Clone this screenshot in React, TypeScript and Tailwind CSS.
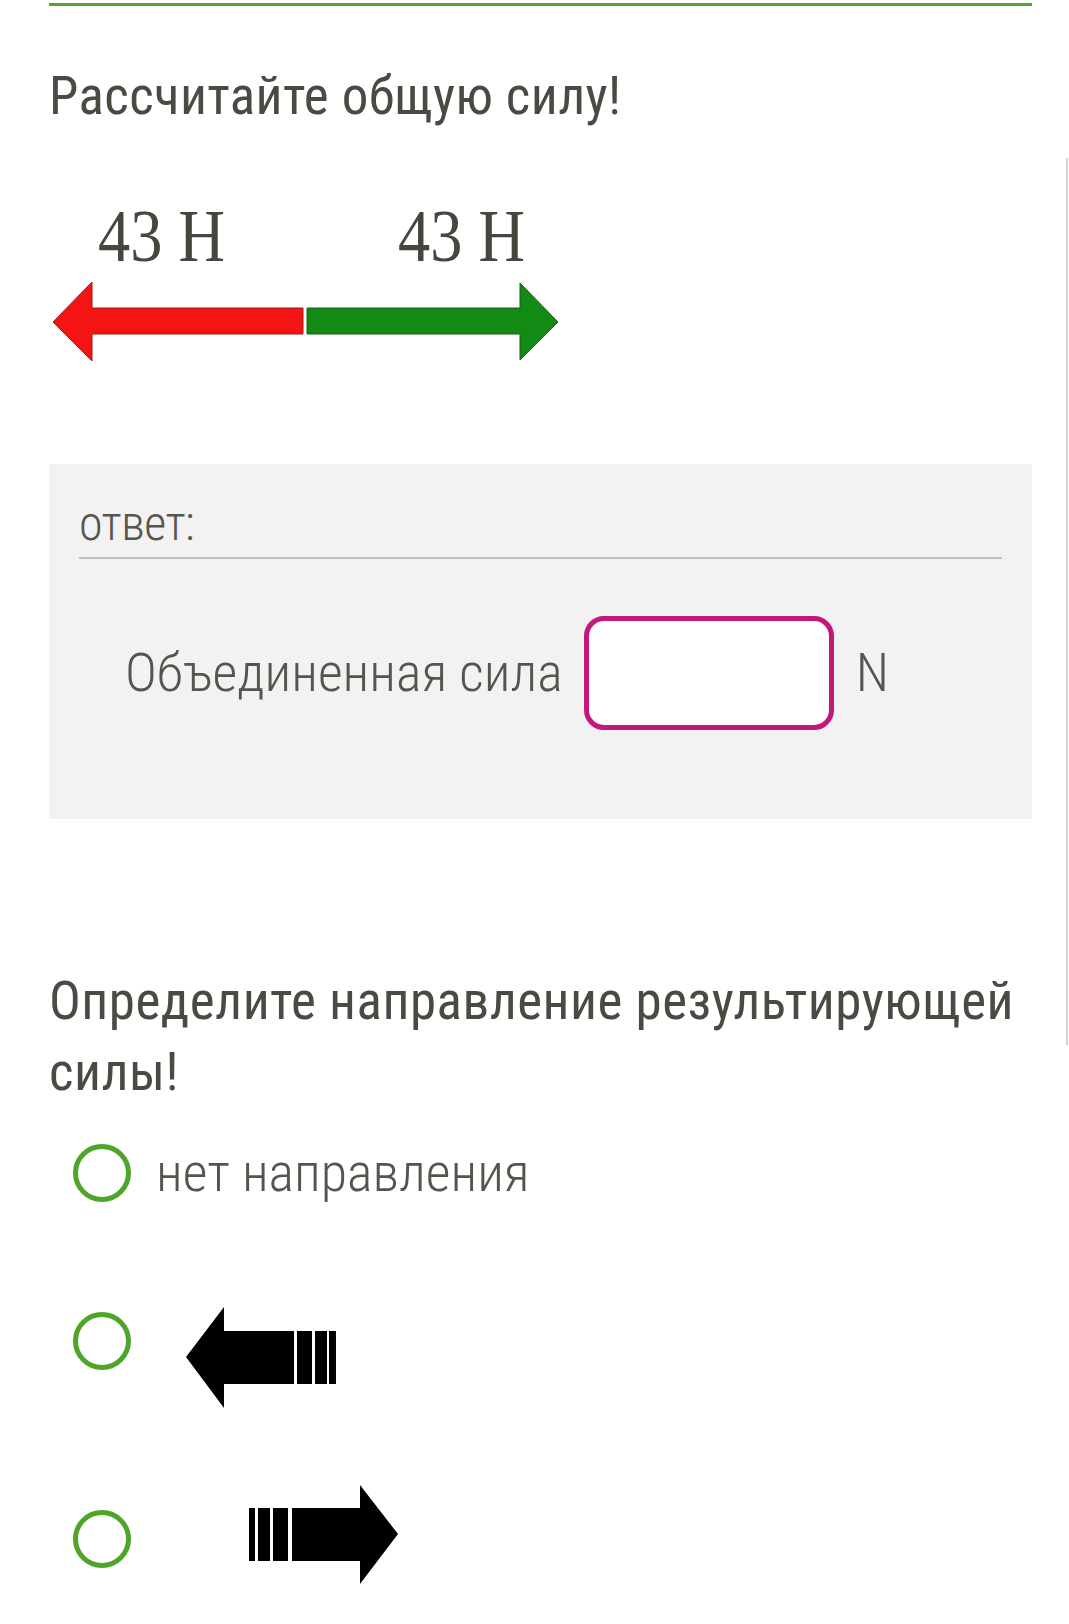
import React from 'react'

const cond = "font-['Roboto_Condensed','Roboto',sans-serif]"

function ForceArrows() {
  return (
    <svg width="520" height="85" viewBox="0 0 520 85" className="block">
      {/* red arrow pointing left */}
      <polygon
        points="4,43 43,3 43,29 254,29 254,55 43,55 43,82"
        fill="#f41414"
        stroke="#9a1b1b"
        strokeWidth="1"
        strokeLinejoin="miter"
      />
      {/* green arrow pointing right */}
      <polygon
        points="258,29 471,29 471,4 509,43 471,81 471,55 258,55"
        fill="#138a13"
        stroke="#1d5a1d"
        strokeWidth="1"
      />
    </svg>
  )
}

function LeftArrow() {
  return (
    <svg width="154" height="104" viewBox="0 0 154 104" className="block shrink-0">
      <polygon points="2,51 40,1 40,25 110,25 110,78 40,78 40,102" fill="#000" />
      <rect x="113" y="25" width="15" height="53" fill="#000" />
      <rect x="131" y="25" width="12" height="53" fill="#000" />
      <rect x="145" y="25" width="7" height="53" fill="#000" />
    </svg>
  )
}

function RightArrow() {
  return (
    <svg width="153" height="102" viewBox="0 0 153 102" className="block shrink-0">
      <rect x="2" y="24" width="6" height="53" fill="#000" />
      <rect x="11" y="24" width="12" height="53" fill="#000" />
      <rect x="26" y="24" width="15" height="53" fill="#000" />
      <polygon points="45,24 113,24 113,1 151,50 113,100 113,77 45,77" fill="#000" />
    </svg>
  )
}

function Radio() {
  return <div className="w-[58px] h-[58px] rounded-full border-[5px] border-[#4fa52a] bg-white shrink-0" />
}

export default function App() {
  return (
    <div className={`relative min-h-[1624px] bg-white pl-[49px] pr-[37px] text-[#4a4a42] ${cond}`}>
      {/* top rule */}
      <div className="pt-[3px]">
        <div className="h-[3px] bg-[#5ba22f]" />
      </div>

      {/* thin scroll line on the right edge */}
      <div className="absolute left-[1066px] top-[158px] h-[887px] w-[2px] bg-[#d2d2d2]" />

      <h1 className="mt-[60px] text-[53px] leading-[60px] font-normal tracking-[0.4px] whitespace-nowrap">Рассчитайте общую силу!</h1>

      {/* force diagram */}
      <div className="mt-[70px] flex font-['Liberation_Serif',serif] text-[74px] leading-[80px] text-[#46463e]">
        <span className="ml-[49px] w-[300px] inline-block origin-left scale-x-[0.87] whitespace-nowrap">43 Н</span>
        <span className="inline-block origin-left scale-x-[0.87] whitespace-nowrap">43 Н</span>
      </div>
      <div className="mt-[3px]">
        <ForceArrows />
      </div>

      {/* answer box */}
      <div className="mt-[100px] bg-[#f2f2f2] px-[30px] pt-[28px] pb-[89px]">
        <div className="text-[48px] leading-[63px] font-light tracking-[-0.5px] text-[#55554d]">ответ:</div>
        <div className="mt-[2px] h-[2px] bg-[#bfbfbf]" />
        <div className="mt-[57px] ml-[46px] flex items-center gap-[21px] text-[54px] font-light text-[#55554d]">
          <span className="whitespace-nowrap leading-[64px]">Объединенная сила</span>
          <div className="w-[250px] h-[114px] rounded-[20px] border-[5px] border-[#c2187b] bg-white shrink-0" />
          <span className="ml-px leading-[64px]">N</span>
        </div>
      </div>

      <h2 className="mt-[147px] text-[53px] leading-[71px] font-normal tracking-[0.5px] whitespace-nowrap">
        Определите направление результирующей
        <br />
        силы!
      </h2>

      {/* options */}
      <div className="mt-[33px] ml-[24px] flex flex-col">
        <div className="flex items-center">
          <Radio />
          <span className="ml-[25px] text-[54px] leading-[64px] font-light text-[#55554d] whitespace-nowrap">нет направления</span>
        </div>
        <div className="mt-[101px] flex items-start">
          <div className="mt-[6px]">
            <Radio />
          </div>
          <div className="ml-[53px]">
            <LeftArrow />
          </div>
        </div>
        <div className="mt-[74px] flex items-start">
          <div className="mt-[26px]">
            <Radio />
          </div>
          <div className="ml-[116px]">
            <RightArrow />
          </div>
        </div>
      </div>
    </div>
  )
}
